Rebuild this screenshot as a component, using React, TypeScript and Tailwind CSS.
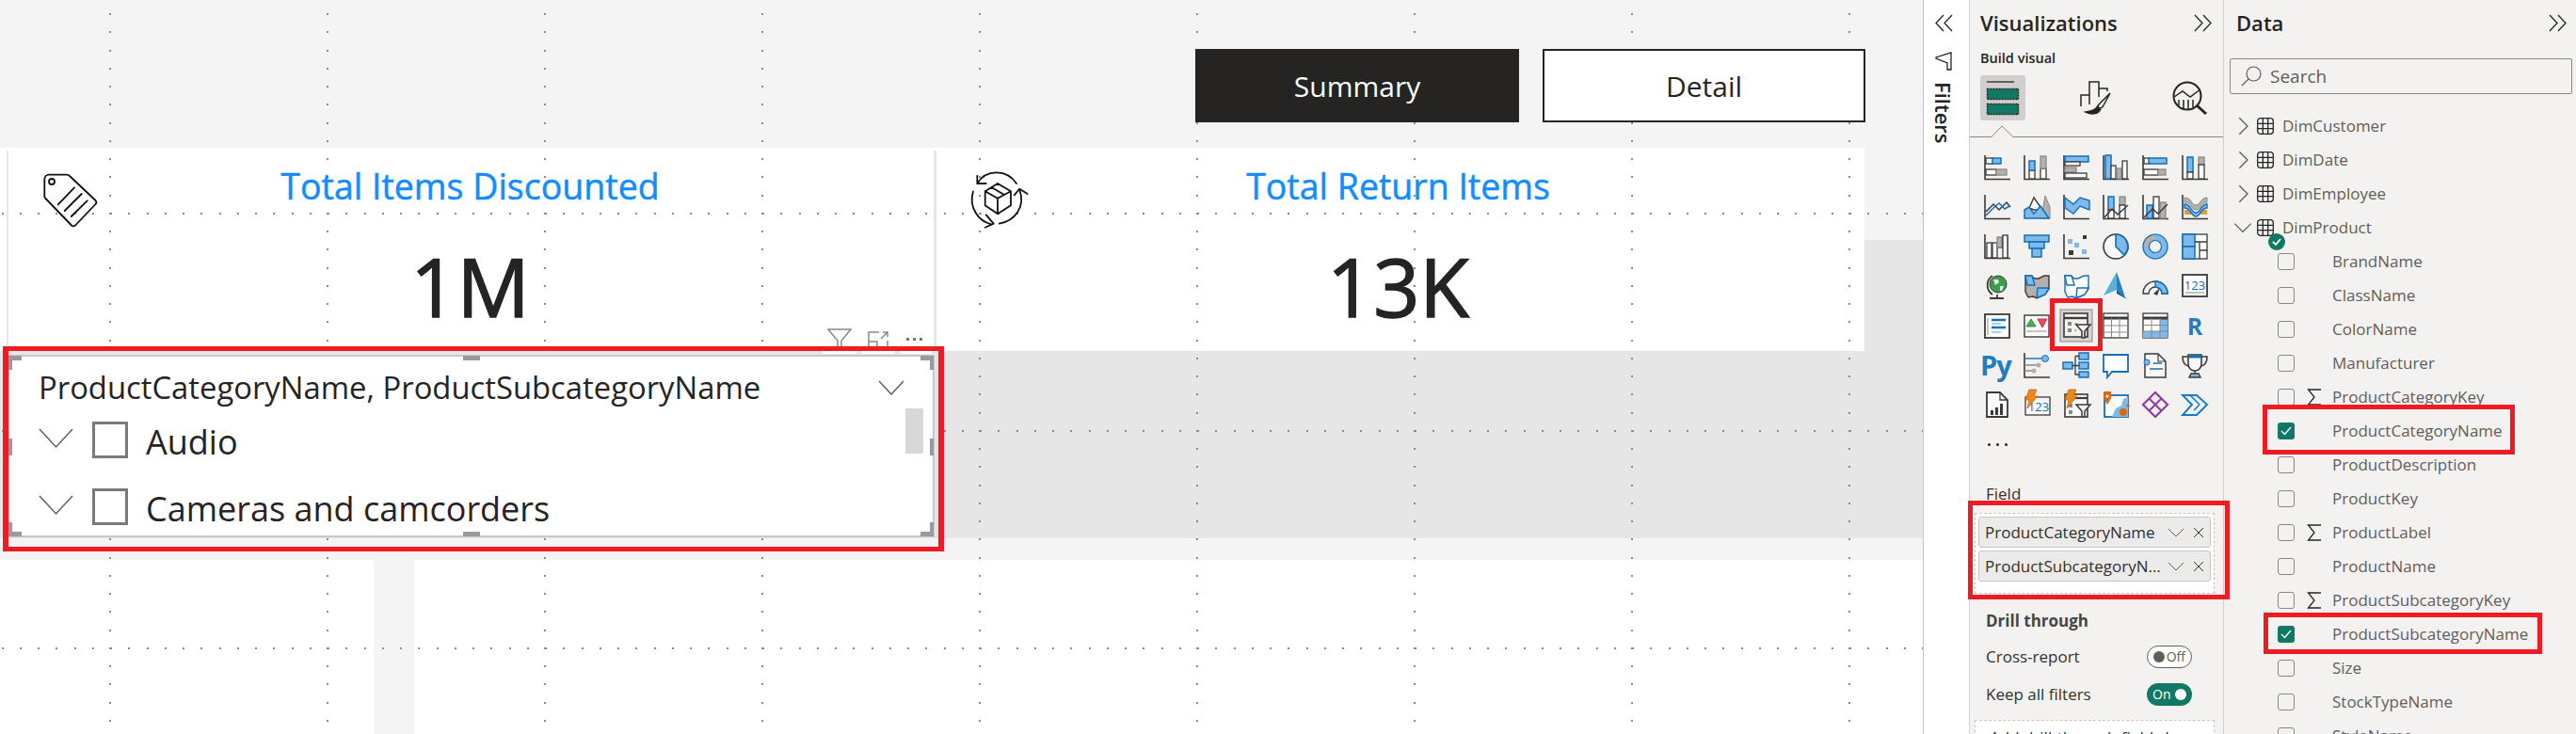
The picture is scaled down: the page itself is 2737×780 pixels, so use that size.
import React from 'react';

const D = '#3b3a39';
const B = '#1170b8';
const L = '#7fb8ea';
const G = '#b3b0ad';
const W = '#ffffff';

// shared attribute sets for the little chart bars
const blue = { fill: L, stroke: B, strokeWidth: 1.5 };
const white = { fill: W, stroke: D, strokeWidth: 1.3 };
const gray = { fill: G, stroke: '#8a8886', strokeWidth: 1.3 };
const none = { fill: 'none', stroke: D, strokeWidth: 1.5 };

const Axis = () => <path d="M1 1V26.5H28" fill="none" stroke={D} strokeWidth="1.6" />;

const Ohio = ({ fill, left }: { fill: string; left: string }) => (
  <>
    <path d="M2 3h6l4 3 4 0 6-3h5v14l-4 6-5 2-4 2-4-2-5 1-3-6z" fill={fill} stroke={fill === W ? B : D} strokeWidth="1.4" />
    <path d="M2 3h7l3 10h-8z" fill={left} stroke={B} strokeWidth="1.4" />
    <path d="M15 16h12l-4 7-5 2-4 1z" fill={left} stroke={B} strokeWidth="1.4" />
  </>
);

const Bolt = () => <path d="M6 -2h8l-3 7h4L4 18l2-9H2z" fill="#ea8a1e" stroke="#c8650c" strokeWidth=".8" />;

const vizIcons: React.ReactNode[] = [
  <><Axis /><rect x="2" y="4" width="8" height="6" {...white} /><rect x="9" y="4" width="9" height="6" {...blue} /><rect x="2" y="16" width="11" height="6" {...white} /><rect x="13" y="16" width="11" height="6" {...gray} /></>,
  <><Axis /><rect x="6" y="17" width="6" height="9" {...white} /><rect x="6" y="7" width="6" height="10" {...blue} /><rect x="18" y="15" width="6" height="11" {...white} /><rect x="18" y="2" width="6" height="13" {...gray} /></>,
  <><Axis /><rect x="2" y="2" width="25" height="6" {...blue} /><rect x="2" y="8" width="16" height="4" {...white} /><rect x="2" y="14" width="12" height="5" {...gray} /><rect x="2" y="20" width="23" height="5" {...white} /></>,
  <><Axis /><rect x="3" y="1" width="6" height="25" {...blue} /><rect x="9" y="12" width="5" height="14" {...white} /><rect x="15" y="15" width="5" height="11" {...gray} /><rect x="21" y="7" width="5" height="19" {...white} /></>,
  <><Axis /><rect x="2" y="4" width="6" height="6" {...white} /><rect x="7" y="4" width="19" height="6" {...blue} /><rect x="2" y="16" width="15" height="6" {...white} /><rect x="17" y="16" width="8" height="6" {...gray} /></>,
  <><Axis /><rect x="6" y="3" width="6" height="16" {...blue} /><rect x="6" y="19" width="6" height="7" {...white} /><rect x="18" y="3" width="6" height="8" {...gray} /><rect x="18" y="11" width="6" height="15" {...white} /></>,

  <><Axis /><path d="M2 19 10 11l6 6 8-8 4 5" {...none} /><path d="M2 23 10 15l6-5 6 6 5-3" fill="none" stroke={B} strokeWidth="1.5" /></>,
  <><path d="M19 26 23 2l5 12v12z" fill={G} stroke="#8a8886" /><path d="M6 15 11 4l9 13-9 0z" fill="#fafafa" stroke={D} strokeWidth="1.4" /><path d="M1 26V17l5-3 5 7 7-8 9 13z" fill={L} stroke={B} strokeWidth="1.5" /></>,
  <><path d="M1 1V26.5H28" fill="none" stroke={D} strokeWidth="1.6" /><path d="M2 4l9 7 7-7 10 3v10l-10-4-7 8-9-6z" fill={L} stroke={B} strokeWidth="1.4" /></>,
  <><Axis /><rect x="6" y="3" width="6" height="14" {...blue} /><rect x="6" y="17" width="6" height="9" {...white} /><rect x="18" y="3" width="6" height="9" {...gray} /><rect x="18" y="12" width="6" height="14" {...white} /><path d="M2 25 10 16l6 6 11-10" fill="none" stroke={D} strokeWidth="1.5" /></>,
  <><Axis /><rect x="5" y="12" width="6" height="14" {...blue} /><rect x="12" y="3" width="6" height="23" {...white} /><rect x="19" y="9" width="6" height="17" {...gray} /><path d="M2 25l9-9 6 5 10-10" fill="none" stroke={D} strokeWidth="1.5" /></>,
  <><Axis /><path d="M3 4c8 0 7 8 12 8s5-8 12-8v5c-7 0-7 8-12 8S11 9 3 9z" fill={G} stroke="#8a8886" /><path d="M3 17h8v5H3zM19 17h8v5h-8z" fill="#ea9a3e" /><path d="M3 11c7 0 7 9 12 9s5-9 12-9v4c-7 0-7 9-12 9S10 15 3 15z" fill={L} stroke={B} strokeWidth="1.4" /></>,

  <><Axis /><rect x="3" y="10" width="5" height="16" {...white} /><rect x="9" y="10" width="5" height="16" {...white} /><path d="M14 15h6V3h5v23h-5" fill="none" stroke={D} strokeWidth="1.3" /><rect x="14" y="4" width="5" height="11" {...gray} /><rect x="20" y="2" width="5" height="24" {...white} /></>,
  <><rect x="1" y="2" width="26" height="7" {...blue} /><rect x="6" y="9" width="16" height="7" {...blue} /><rect x="9" y="16" width="10" height="9" {...blue} /></>,
  <><Axis /><rect x="21" y="2" width="4" height="4" fill={D} /><rect x="5" y="6" width="5" height="5" fill={L} /><rect x="12" y="10" width="5" height="5" fill={L} /><rect x="6" y="18" width="5" height="5" fill={D} /><rect x="20" y="17" width="5" height="5" fill={L} /></>,
  <><circle cx="14" cy="14" r="13" fill="#fafafa" stroke={D} strokeWidth="1.6" /><path d="M14 1a13 13 0 0 1 9 22L14 14z" fill={L} stroke={B} strokeWidth="1.6" /></>,
  <><circle cx="14" cy="14" r="10" fill="none" stroke={L} strokeWidth="7" /><path d="M4 14A10 10 0 0 1 14 4" fill="none" stroke={G} strokeWidth="7" /><circle cx="14" cy="14" r="13" fill="none" stroke={B} strokeWidth="1.2" /><circle cx="14" cy="14" r="6.5" fill="none" stroke={B} strokeWidth="1.2" /></>,
  <><rect x="1" y="1" width="26" height="26" {...white} /><rect x="1" y="1" width="13" height="13" {...blue} /><rect x="1" y="14" width="13" height="13" {...blue} /><path d="M14 9h13M19 9v18M19 18h8" fill="none" stroke={D} strokeWidth="1.3" /></>,

  <><path d="M9 3a12 12 0 0 0 0 20M6 27h15M14 23v4" fill="none" stroke={D} strokeWidth="1.8" /><circle cx="15" cy="12" r="9" fill="#3c9c4c" stroke={D} strokeWidth="1" /><path d="M10 7h5l1 3-4 3zM17 14h4l-2 5h-2z" fill="#fff" opacity=".85" /></>,
  <Ohio fill={G} left={L} />,
  <Ohio fill={W} left={W} />,
  <><path d="M15 -1 1 24l14-6z" fill="#5ab0d8" /><path d="M15 -1 24 26l-9-8z" fill="#2a7fc0" /><path d="M15 18l9 8 2 2-11-6z" fill="#0f5aa0" /></>,
  <><path d="M1 22a13 13 0 0 1 26 0h-6a7 7 0 0 0-14 0z" fill="#fafafa" stroke={D} strokeWidth="1.4" /><path d="M14 9a13 13 0 0 1 13 13h-6a7 7 0 0 0-7-7z" fill={L} stroke={B} strokeWidth="1.4" /><path d="M12 22l7-6-3 8z" fill={D} /></>,
  <><rect x="1" y="2" width="26" height="23" fill={W} stroke={D} strokeWidth="1.8" /><text x="14" y="18" textAnchor="middle" fontSize="13" fill={B} fontFamily="Open Sans">123</text><path d="M4 21h20" stroke="#8a8886" /></>,

  <><rect x="1" y="2" width="26" height="25" fill={W} stroke={D} strokeWidth="1.8" /><path d="M4 6v18" stroke="#8a8886" /><path d="M8 8h15M8 16h15" stroke={B} strokeWidth="2.6" /><path d="M8 12h10M8 21h10" stroke="#5ba0d8" strokeWidth="1.2" /></>,
  <><rect x="1" y="3" width="26" height="23" fill={W} stroke={D} strokeWidth="1.4" /><path d="M8 7l5 8H3z" fill="#4caf50" stroke="#2f8f3a" /><path d="M15 7h10l-5 9z" fill="#e8505b" stroke="#c0303c" /><path d="M3 20h22" stroke="#8a8886" /></>,
  <><rect x="-3" y="-3" width="34" height="34" fill="#d6d4d2" stroke="#8a8886" /><rect x="1" y="1" width="25" height="25" fill="#f3f2f1" stroke={D} strokeWidth="1.6" /><path d="M1 6h25" stroke={D} strokeWidth="2.4" /><rect x="5" y="10" width="4" height="4" fill="#8a8886" /><rect x="5" y="17" width="4" height="4" fill="#8a8886" /><path d="M12 12h4M12 19h3" stroke="#8a8886" /><path d="M14 13h15l-6 7v7h-3v-7z" fill="#f3f2f1" stroke={D} strokeWidth="1.6" /></>,
  <><rect x="1" y="1" width="26" height="26" {...white} /><path d="M1 6h26" stroke={D} strokeWidth="3" /><path d="M1 14h26M1 21h26M9.5 6v21M18 6v21" stroke="#8a8886" /></>,
  <><rect x="1" y="1" width="26" height="26" {...white} /><rect x="19" y="7" width="8" height="20" fill={L} /><rect x="1" y="20" width="26" height="7" fill={L} /><path d="M1 6h26" stroke={D} strokeWidth="3" /><path d="M1 13.5h26M1 20h26M10 6v21M19 6v21" stroke="#8a8886" /></>,
  <div className="text-center text-[25px] leading-[28px] font-bold text-[#1f7ec2]">R</div>,

  <div className="text-center text-[29px] leading-[28px] font-bold tracking-[-1px] text-[#1f7ec2] -ml-1">Py</div>,
  <><path d="M1 1V27H28" fill="none" stroke={D} strokeWidth="1.6" /><path d="M1 7h20" stroke={B} strokeWidth="1.4" /><circle cx="23" cy="7" r="3.5" fill={L} stroke={B} /><path d="M1 14h13M1 20h8" stroke="#8a8886" strokeWidth="1.4" /><circle cx="16" cy="14" r="2.5" fill={G} /><circle cx="11" cy="20" r="2.5" fill={G} /></>,
  <><rect x="0" y="11" width="10" height="7" {...blue} /><rect x="17" y="1" width="10" height="7" {...blue} /><rect x="17" y="11" width="10" height="7" {...blue} /><rect x="17" y="21" width="10" height="6" {...blue} /><path d="M10 14.5h7M13 4.5v20M13 4.5h4M13 24h4" fill="none" stroke={D} strokeWidth="1.3" /></>,
  <path d="M1 3h26v18H10l-5 6v-6H1z" fill={W} stroke={B} strokeWidth="1.8" />,
  <><path d="M3 2h14l8 8v17H3z" fill="#fafafa" stroke={D} strokeWidth="1.5" /><path d="M17 2v8h8" fill="none" stroke={D} strokeWidth="1.2" /><circle cx="5" cy="11" r="3" fill={L} stroke={B} /><path d="M12 12h9M8 18h14" stroke={B} strokeWidth="1.4" /></>,
  <><path d="M7 3h14v10a7 7 0 0 1-14 0z" fill="#fafafa" stroke={D} strokeWidth="1.6" /><path d="M7 5h14" stroke={B} strokeWidth="3" /><path d="M7 5H1c0 6 2 9 6 10M21 5h6c0 6-2 9-6 10" fill="none" stroke={D} strokeWidth="1.6" /><path d="M14 20v3M8 27h12l-2-4h-8z" fill={L} stroke={D} strokeWidth="1.4" /></>,

  <><path d="M3 1h14l8 8v18H3z" fill="#fafafa" stroke={D} strokeWidth="1.8" /><path d="M17 1v8h8" fill="none" stroke={D} strokeWidth="1.3" /><rect x="7" y="20" width="3" height="5" fill={D} /><rect x="12" y="17" width="3" height="8" fill={D} /><rect x="17" y="13" width="3" height="12" fill={D} /></>,
  <><rect x="2" y="6" width="26" height="19" fill="#fafafa" stroke={D} strokeWidth="1.3" /><text x="16" y="21" textAnchor="middle" fontSize="13" fill={B} fontFamily="Open Sans">123</text><Bolt /></>,
  <><rect x="2" y="3" width="24" height="24" fill="#fafafa" stroke={D} strokeWidth="1.6" /><path d="M8 7h18" stroke={D} strokeWidth="2.2" /><rect x="6" y="13" width="4" height="4" fill="#8a8886" /><rect x="6" y="20" width="4" height="4" fill="#8a8886" /><path d="M14 14h15l-6 7v6h-3v-6z" fill="#f3f2f1" stroke={D} strokeWidth="1.5" /><Bolt /></>,
  <><rect x="2" y="4" width="25" height="23" fill="#fafafa" stroke={B} strokeWidth="1.8" /><path d="M10 27l4-9 6-3 2-7 5-2v21z" fill={L} /><path d="M1 0h8v7l-4 7-4-7z" fill="#d9680f" /><circle cx="5" cy="5" r="1.5" fill="#fff" /><circle cx="22" cy="22" r="4" fill="#d9680f" /><circle cx="27" cy="15" r="1.8" fill="#d9680f" /></>,
  <><path d="M14 1l13 13-13 13L1 14z" fill="none" stroke="#8e3d9e" strokeWidth="2.2" /><path d="M7.5 7.5 20.500 20.500M20.500 7.500 7.500 20.500" stroke="#8e3d9e" strokeWidth="2" /></>,
  <><path d="M1 4h15l11 10-11 11H1l10-11z" fill="none" stroke="#0e7ad0" strokeWidth="1.9" /><path d="M9 4l10 10M13 20l6-6" stroke="#0e7ad0" strokeWidth="1.5" /></>,
];

const PowerFont = "font-['Open_Sans',sans-serif]";

const Chevron = ({ open, size = 14, color = '#605e5c' }: { open?: boolean; size?: number; color?: string }) => (
  <svg width={size} height={size} viewBox="0 0 16 16" className="shrink-0">
    <path d={open ? 'M1 4.500 8 11.500 15 4.500' : 'M5 1 12 8 5 15'} fill="none" stroke={color} strokeWidth="1.100" />
  </svg>
);

const Arrows = ({ left }: { left?: boolean }) => (
  <svg width="19" height="19" viewBox="0 0 19 19" className="shrink-0">
    <path d={left ? 'M9 1 1 9.500 9 18M18 1 10 9.500 18 18' : 'M1 1 9 9.500 1 18M10 1 18 9.500 10 18'} fill="none" stroke="#252423" strokeWidth="1.300" />
  </svg>
);

// report page dot grid: every 19.25px along lines that are 231px apart
const GridDots = () => {
  const dots: React.ReactNode[] = [];
  for (let col = -1; col < 9; col++) {
    const x = Math.round(116 + col * 231);
    for (let y = 14; y < 780; y += 19.25) dots.push(<rect key={`c${col}-${y}`} x={x} y={Math.round(y)} width="2" height="2" fill="#8a8a8a" />);
  }
  [226, 457, 688].forEach((y) => {
    for (let x = 1.5; x < 2043; x += 19.25) dots.push(<rect key={`r${y}-${x}`} x={Math.round(x)} y={y} width="2" height="2" fill="#8a8a8a" />);
  });
  return <svg width="2043" height="780" className="absolute left-0 top-0">{dots}</svg>;
};

const TagIcon = () => (
  <svg width="100" height="80" viewBox="0 0 100 80" fill="none" stroke="#111" strokeWidth="1.800" strokeLinecap="round" strokeLinejoin="round" className="absolute left-[30px] top-[170px]">
    <path d="M22 15.700H41a4 4 0 0 1 3 1.300L71.500 43a3 3 0 0 1 0 4L50 69.500a3 3 0 0 1-4 0L18 40.500a3 3 0 0 1-.7-2V20.500a5 5 0 0 1 4.700-4.800z" />
    <circle cx="25" cy="23" r="3" />
    <path d="M49 29.300 31.700 47.300M56.700 36 38.700 54M62.700 43.300 45.700 60" />
  </svg>
);

const ReturnIcon = () => (
  <svg width="100" height="80" viewBox="0 0 100 80" fill="none" stroke="#111" strokeWidth="1.800" strokeLinecap="round" strokeLinejoin="round" className="absolute left-[1015px] top-[170px]">
    <path d="M45 25 59 33.300V48.300L45 57.300 31.700 48.300V33.300zM31.700 33.300 45 40.700 59 33.300M45 40.700V57.300M38.500 29 52 37" />
    <path d="M23.300 25C33 9 55 10 65 25M23.300 16.700V25H32.700" />
    <path d="M68.300 31.700C75 50 63 65 46.700 67.700M62.700 37.300 68.300 30.700 76.700 36" />
    <path d="M19 33.300C14 50 24 65 38.300 68.300M32.700 58.300 40.700 67.700 31.700 71.700" />
  </svg>
);

const KpiCard = ({ title, value, x, w }: { title: string; value: string; x: string; w: string }) => (
  <div className={`absolute top-[157px] h-[216px] flex flex-col items-center ${x} ${w}`}>
    <div className="mt-[19px] text-[37.500px] leading-[44px] text-[#118dff] [-webkit-text-stroke:0.5px_#118dff]">{title}</div>
    <div className="mt-[26px] text-[86px] leading-[116px] text-[#252423] [-webkit-text-stroke:1.500px_#252423]">{value}</div>
  </div>
);

const Handle = ({ className }: { className: string }) => <div className={`absolute bg-[#9a9a9a] ${className}`} />;

const SlicerRow = ({ label }: { label: string }) => (
  <div className="flex h-[71px] items-center pl-[31px]">
    <svg width="37" height="22" viewBox="0 0 37 22" className="shrink-0 -mt-[3px]">
      <path d="M1 1 18.500 20 36 1" fill="none" stroke="#605e5c" strokeWidth="1.500" />
    </svg>
    <div className="ml-[20px] h-[39px] w-[38px] border-[3px] border-[#7a7a7a] bg-white" />
    <div className="ml-[19px] mt-[4px] text-[36px] leading-none text-[#252423]">{label}</div>
  </div>
);

const Slicer = () => (
  <div className="absolute left-[8px] top-[377px] h-[194px] w-[985px] overflow-visible border-2 border-[#c8c8c8] bg-white">
    <div className="flex items-center justify-between pl-[31px] pr-[30px] pt-[8px]">
      <div className="text-[32.800px] leading-[50px] text-[#252423]">ProductCategoryName, ProductSubcategoryName</div>
      <svg width="28" height="16" viewBox="0 0 28 16"><path d="M1 1 14 15 27 1" fill="none" stroke="#605e5c" strokeWidth="1.500" /></svg>
    </div>
    <div className="-mt-[5px]">
      <SlicerRow label="Audio" />
      <SlicerRow label="Cameras and camcorders" />
    </div>
    <div className="absolute left-[952px] top-[55px] h-[48px] w-[19px] bg-[#d9d8d6]" />
    <Handle className="-left-[1px] -top-[1px] h-[5px] w-[14px]" />
    <Handle className="-left-[1px] -top-[1px] h-[15px] w-[4px]" />
    <Handle className="-right-[1px] -top-[1px] h-[5px] w-[14px]" />
    <Handle className="-right-[1px] -top-[1px] h-[15px] w-[4px]" />
    <Handle className="-left-[1px] -bottom-[1px] h-[5px] w-[14px]" />
    <Handle className="-left-[1px] -bottom-[1px] h-[15px] w-[4px]" />
    <Handle className="-right-[1px] -bottom-[1px] h-[5px] w-[14px]" />
    <Handle className="-right-[1px] -bottom-[1px] h-[15px] w-[4px]" />
    <Handle className="left-[482px] -top-[1px] h-[5px] w-[18px]" />
    <Handle className="left-[482px] -bottom-[1px] h-[5px] w-[18px]" />
    <Handle className="-left-[1px] top-[87px] h-[18px] w-[4px]" />
    <Handle className="-right-[1px] top-[87px] h-[18px] w-[4px]" />
  </div>
);

const Canvas = () => (
  <div className="relative h-full w-[2043px] shrink-0 overflow-hidden bg-[#f4f4f4]">
    {/* page sections */}
    <div className="absolute left-[1981px] top-[255px] h-[118px] w-[62px] bg-[#e6e6e6]" />
    <div className="absolute left-0 top-[373px] h-[199px] w-full bg-[#e6e6e6]" />
    <div className="absolute left-0 top-[595px] h-[185px] w-[397px] bg-white" />
    <div className="absolute left-[440px] top-[595px] h-[185px] w-[1603px] bg-white" />
    <div className="absolute left-0 top-[157px] h-[216px] w-[1981px] bg-white" />
    <div className="absolute left-[7px] top-[160px] h-[213px] w-[2px] bg-[#e6e6e6]" />
    <div className="absolute left-[992px] top-[160px] h-[213px] w-[3px] bg-[#e6e6e6]" />

    <GridDots />

    <div className="absolute left-[1270px] top-[52px] flex h-[78px] w-[344px] items-center justify-center bg-[#252423] text-[30px] text-white">Summary</div>
    <div className="absolute left-[1639px] top-[52px] flex h-[78px] w-[343px] items-center justify-center border-2 border-[#252423] bg-white text-[30px] text-[#252423]">Detail</div>

    <KpiCard title="Total Items Discounted" value="1M" x="left-[9px]" w="w-[981px]" />
    <KpiCard title="Total Return Items" value="13K" x="left-[995px]" w="w-[981px]" />
    <TagIcon />
    <ReturnIcon />

    {/* visual header over the slicer */}
    <div className="absolute left-[874px] top-[349px] flex h-[27px] gap-[5px]">
      <div className="flex w-[36px] justify-center bg-white">
        <svg width="26" height="24" viewBox="0 0 26 24"><path d="M1 1H25L15 13V24H11V13z" fill="white" stroke="#8a8886" strokeWidth="1.500" /></svg>
      </div>
      <div className="flex w-[36px] justify-center bg-white pt-[3px]">
        <svg width="22" height="20" viewBox="0 0 22 20"><path d="M12 1H1V19H21V10M14 8 21 1M16 1H21V6M1 11H10V19" fill="none" stroke="#8a8886" strokeWidth="1.500" /></svg>
      </div>
      <div className="w-[34px] bg-white pl-[7px] pt-[10px]">
        <div className="flex gap-[4px]">
          <div className="size-[3px] bg-[#777]" />
          <div className="size-[3px] bg-[#777]" />
          <div className="size-[3px] bg-[#777]" />
        </div>
      </div>
    </div>

    <Slicer />
    <div className="absolute left-[3px] top-[368px] h-[218px] w-[1000px] border-x-[6px] border-y-[5px] border-[#ed1c24]" />
  </div>
);

const FiltersPane = () => (
  <div className="flex h-full w-[49px] shrink-0 flex-col items-center border-l border-[#c8c6c4] bg-white pl-[4px] pr-[10px]">
    <div className="mt-[15px]"><Arrows left /></div>
    <svg width="18" height="20" viewBox="0 0 18 20" className="mt-[21px]">
      <path d="M17 1V19L13 19V12L1 7 1 6 17 1z" fill="none" stroke="#252423" strokeWidth="1.300" />
    </svg>
    <div className="mt-[12px] text-[22px] font-semibold leading-none text-[#252423] [writing-mode:vertical-rl]">Filters</div>
  </div>
);

const BuildIcon = () => (
  <svg width="36" height="38" viewBox="0 0 36 38">
    <path d="M1 2H30" stroke="#252423" strokeWidth="1.300" />
    <rect x="1.500" y="9.500" width="33" height="11" fill="#117865" stroke="#252423" strokeWidth="1.500" strokeDasharray="2 1" />
    <rect x="1.500" y="25.500" width="33" height="11" fill="#117865" stroke="#252423" strokeWidth="1.500" strokeDasharray="2 1" />
  </svg>
);

const FormatIcon = () => (
  <svg width="34" height="36" viewBox="0 0 34 36" fill="none" stroke="#252423" strokeWidth="1.500">
    <path d="M1 27V15H10V1H20V8H29V11M10 15V25M20 8V17" />
    <path d="M32 13 20 25c-2 3-1 4 1 4 2 0 3-1 4-3z" />
    <path d="M19 26c-1 5-7 6-13 7 6 3 13 3 16-3" fill="#252423" />
  </svg>
);

const AnalyticsIcon = () => (
  <svg width="37" height="37" viewBox="0 0 37 37" fill="none" stroke="#252423" strokeWidth="1.500">
    <circle cx="16" cy="16" r="14.500" strokeWidth="2" />
    <path d="M2 17 11 11 19 17 30 9" />
    <path d="M7 20V26M12 20V29M17 20V30M22 20V28" />
    <path d="M26 26 36 35" strokeWidth="3" />
  </svg>
);

const FieldChip = ({ label }: { label: string }) => (
  <div className="flex h-[33px] shrink-0 items-center rounded-[3px] border border-[#c8c6c4] bg-[#edebe9] pl-[6px] text-[17px] text-[#323130]">
    <span className="w-[189px] truncate">{label}</span>
    <svg width="18" height="10" viewBox="0 0 18 10" className="ml-[5px] shrink-0"><path d="M1 1 9 9 17 1" fill="none" stroke="#605e5c" /></svg>
    <svg width="12" height="12" viewBox="0 0 12 12" className="ml-[9px] shrink-0"><path d="M1 1 11 11M11 1 1 11" fill="none" stroke="#323130" /></svg>
  </div>
);

const Toggle = ({ on }: { on?: boolean }) => (
  <div className={`flex h-[24px] w-[48px] items-center justify-between rounded-full px-[6px] text-[14px] leading-none ${on ? 'bg-[#117865] text-white' : 'border border-[#605e5c] bg-white text-[#605e5c]'}`}>
    {on ? <span>On</span> : <span className="size-[12px] rounded-full bg-[#605e5c]" />}
    {on ? <span className="size-[12px] rounded-full bg-white" /> : <span>Off</span>}
  </div>
);

const VizPane = () => (
  <div className="relative z-10 flex h-full w-[271px] shrink-0 flex-col border-x border-[#d2d0ce] bg-[#f3f2f1]">
    <div className="flex h-[48px] shrink-0 items-center justify-between pl-[11px] pr-[12px]">
      <div className="text-[22px] font-semibold leading-none text-[#252423]">Visualizations</div>
      <Arrows />
    </div>
    <div className="mt-[5px] shrink-0 pl-[11px] text-[14.500px] font-semibold leading-[18px] text-[#252423]">Build visual</div>
    <div className="mt-[9px] flex shrink-0 items-center gap-[51px] pl-[11px]">
      <div className="flex size-[48px] items-center justify-center rounded-[3px] bg-[#d0cfcd]"><BuildIcon /></div>
      <div className="flex w-[48px] justify-center"><FormatIcon /></div>
      <div className="flex w-[48px] justify-center"><AnalyticsIcon /></div>
    </div>
    <svg width="269" height="18" viewBox="0 0 269 18" className="shrink-0">
      <path d="M0 17.500H23L34 6 46 17.500H269" fill="none" stroke="#8a8886" />
    </svg>
    <div className="mt-[11px] grid shrink-0 grid-cols-[repeat(6,42px)] auto-rows-[42px] pl-[8px]">
      {vizIcons.map((icon, i) => (
        <div key={i} className="flex items-center justify-center">
          {React.isValidElement(icon) && icon.type === 'div' ? (
            <div className="w-[28px]">{icon}</div>
          ) : (
            <svg width="28" height="28" viewBox="0 0 28 28" className="overflow-visible">{icon}</svg>
          )}
        </div>
      ))}
      <div className="flex items-center justify-center gap-[6px]">
        <div className="size-[3px] rounded-full bg-[#252423]" />
        <div className="size-[3px] rounded-full bg-[#252423]" />
        <div className="size-[3px] rounded-full bg-[#252423]" />
      </div>
    </div>
    <div className="mt-[22px] shrink-0 pl-[17px] text-[17px] leading-[20px] text-[#323130]">Field</div>
    <div className="ml-[5px] mr-[9px] mt-[10px] flex h-[86px] shrink-0 flex-col gap-[3px] border border-dashed border-[#c8c6c4] bg-white p-[3px]">
      <FieldChip label="ProductCategoryName" />
      <FieldChip label="ProductSubcategoryName" />
    </div>
    <div className="mt-[19px] shrink-0 pl-[17px] text-[17px] font-bold leading-[20px] text-[#484644]">Drill through</div>
    <div className="mt-[16px] flex h-[24px] shrink-0 items-center justify-between pl-[17px] pr-[33px] text-[17px] text-[#323130]">
      <span>Cross-report</span>
      <Toggle />
    </div>
    <div className="mt-[16px] flex h-[24px] shrink-0 items-center justify-between pl-[17px] pr-[33px] text-[17px] text-[#323130]">
      <span>Keep all filters</span>
      <Toggle on />
    </div>
    <div className="ml-[5px] mr-[9px] mt-[15px] h-[40px] shrink-0 border border-dashed border-[#c8c6c4] bg-white pl-[15px] pt-[5px] text-[17px] text-[#323130]">Add drill-through fields here</div>

    {/* callouts */}
    <div className="absolute left-[85px] top-[317px] h-[56px] w-[56px] border-[5px] border-[#ed1c24]" />
    <div className="absolute -left-[2px] top-[532px] h-[105px] w-[278px] border-[5px] border-[#ed1c24]" />
  </div>
);

const TableIcon = () => (
  <svg width="18" height="18" viewBox="0 0 18 18" className="shrink-0" fill="none" stroke="#252423" strokeWidth="1.300">
    <rect x=".7" y=".7" width="16.600" height="16.600" rx="3" />
    <path d="M6.300 1V17M11.700 1V17M1 6.300H17M1 11.700H17" />
  </svg>
);

const Sigma = () => (
  <svg width="16" height="18" viewBox="0 0 16 18" className="shrink-0">
    <path d="M15 1H1.500L8 9 1.500 17H15" fill="none" stroke="#252423" strokeWidth="1.300" />
  </svg>
);

const TableRow = ({ name, open }: { name: string; open?: boolean }) => (
  <div className="relative flex h-[36px] items-center pl-[10px] text-[#605e5c]">
    <div className="flex w-[20px] justify-center"><Chevron open={open} size={20} /></div>
    <div className="ml-[5px]"><TableIcon /></div>
    <span className="ml-[9px]">{name}</span>
    {open && (
      <div className="absolute left-[47px] top-[24px] flex size-[18px] items-center justify-center rounded-full bg-[#117865]">
        <svg width="10" height="8" viewBox="0 0 10 8"><path d="M1 4 4 7 9 1" fill="none" stroke="white" strokeWidth="1.800" /></svg>
      </div>
    )}
  </div>
);

const FieldRow = ({ name, checked, sum }: { name: string; checked?: boolean; sum?: boolean }) => (
  <div className="flex h-[36px] items-center pl-[57px] text-[#605e5c]">
    {checked ? (
      <div className="flex size-[18px] shrink-0 items-center justify-center rounded-[3px] bg-[#117865]">
        <svg width="12" height="10" viewBox="0 0 12 10"><path d="M1 5 4.500 8.500 11 1" fill="none" stroke="white" strokeWidth="1.300" /></svg>
      </div>
    ) : (
      <div className="size-[18px] shrink-0 rounded-[3px] border border-[#8a8886]" />
    )}
    <div className="ml-[13px] w-[27px] shrink-0">{sum && <Sigma />}</div>
    <span>{name}</span>
  </div>
);

const fields: { name: string; checked?: boolean; sum?: boolean }[] = [
  { name: 'BrandName' },
  { name: 'ClassName' },
  { name: 'ColorName' },
  { name: 'Manufacturer' },
  { name: 'ProductCategoryKey', sum: true },
  { name: 'ProductCategoryName', checked: true },
  { name: 'ProductDescription' },
  { name: 'ProductKey' },
  { name: 'ProductLabel', sum: true },
  { name: 'ProductName' },
  { name: 'ProductSubcategoryKey', sum: true },
  { name: 'ProductSubcategoryName', checked: true },
  { name: 'Size' },
  { name: 'StockTypeName' },
  { name: 'StyleName' },
];

const DataPane = () => (
  <div className="relative flex h-full flex-1 flex-col overflow-hidden bg-[#f3f2f1] text-[17px]">
    <div className="flex h-[48px] shrink-0 items-center justify-between pl-[13px] pr-[10px]">
      <div className="text-[22px] font-semibold leading-none text-[#252423]">Data</div>
      <Arrows />
    </div>
    <div className="ml-[6px] mr-[4px] mt-[14px] flex h-[38px] shrink-0 items-center rounded-[2px] border border-[#8a8886] bg-[#f3f2f1] pl-[11px] text-[19px] text-[#605e5c]">
      <svg width="22" height="22" viewBox="0 0 22 22" fill="none" stroke="#605e5c" strokeWidth="1.200">
        <circle cx="13.500" cy="8.500" r="7.500" />
        <path d="M8 14 1 21" />
      </svg>
      <span className="ml-[9px]">Search</span>
    </div>
    <div className="mt-[16px] shrink-0">
      <TableRow name="DimCustomer" />
      <TableRow name="DimDate" />
      <TableRow name="DimEmployee" />
      <TableRow name="DimProduct" open />
      {fields.map((f) => (
        <FieldRow key={f.name} {...f} />
      ))}
    </div>
    <div className="absolute left-[41px] top-[430px] h-[53px] w-[268px] border-[5px] border-[#ed1c24]" />
    <div className="absolute left-[42px] top-[651px] h-[44px] w-[296px] border-[5px] border-[#ed1c24]" />
  </div>
);

export default function App() {
  return (
    <div className={`flex h-[780px] w-[2737px] overflow-hidden bg-white ${PowerFont}`}>
      <Canvas />
      <FiltersPane />
      <VizPane />
      <DataPane />
    </div>
  );
}
